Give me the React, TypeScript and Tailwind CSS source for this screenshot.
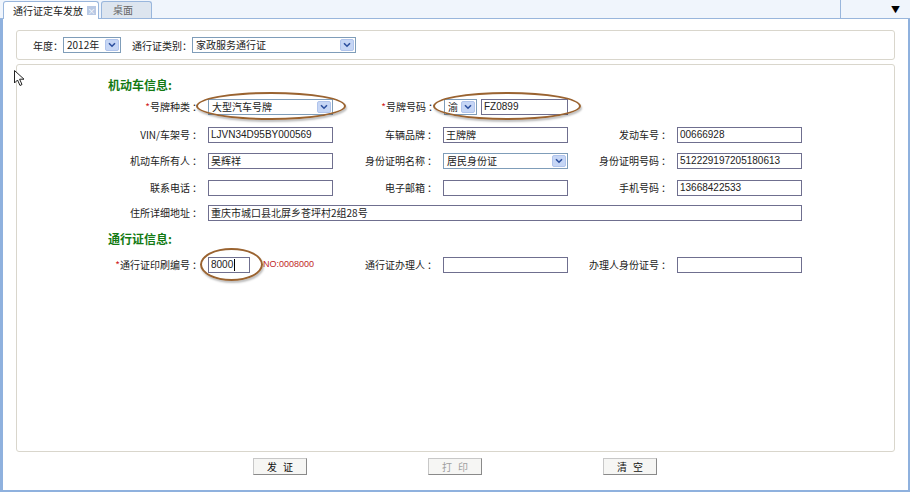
import { FC, ReactNode } from 'react';

const font = 'font-["Noto_Sans_CJK_SC","Liberation_Sans",sans-serif]';

const Chevron: FC = () => (
  <svg width="8" height="6" viewBox="0 0 8 6" className="block">
    <path d="M1 1.2 L4 4.2 L7 1.2" fill="none" stroke="#2c4f9e" strokeWidth="1.6" />
  </svg>
);

const Select: FC<{ value: string; className?: string }> = ({ value, className }) => (
  <div className={`flex h-[16px] items-center border border-[#7f9db9] bg-white ${className ?? ''}`}>
    <span className="flex-1 overflow-hidden whitespace-nowrap pl-[3px] text-[10px] leading-[14px] text-[#222]">
      {value}
    </span>
    <span className="mr-px flex h-[12px] w-[14px] items-center justify-center rounded-[2px] bg-[#c6d6f5] border border-[#b0c4ec]">
      <Chevron />
    </span>
  </div>
);

const Field: FC<{ value?: string; className?: string; mono?: boolean; children?: ReactNode }> = ({
  value,
  className,
  mono,
  children,
}) => (
  <div
    className={`flex h-[16px] items-center border border-[#6f6f8f] bg-white pl-[2px] text-[#222] whitespace-nowrap overflow-hidden ${
      mono ? 'font-["Liberation_Sans",sans-serif] text-[10px]' : 'text-[10px]'
    } leading-[14px] ${className ?? 'w-[125px]'}`}
  >
    {value}
    {children}
  </div>
);

const Label: FC<{ text: string; w: string; required?: boolean }> = ({ text, w, required }) => (
  <div className={`${w} shrink-0 pr-[6px] text-right text-[10px] leading-[14px] text-[#222]`}>
    {required && <span className="text-[#d02020]">*</span>}
    {text}
    <span className="ml-[2px]">：</span>
  </div>
);

const Ring: FC<{ className: string }> = ({ className }) => (
  <span
    className={`pointer-events-none absolute rounded-[50%] border-2 border-[#9a6330] shadow-[1px_2px_2px_rgba(0,0,0,0.25)] ${className}`}
  />
);

const Button: FC<{ text: string; disabled?: boolean }> = ({ text, disabled }) => (
  <button
    className={`h-[17px] w-[54px] border border-[#8a8a8a] border-t-[#c8c8c8] border-l-[#c8c8c8] bg-[#f6f6f4] text-[10px] leading-[15px] tracking-[6px] pl-[6px] ${
      disabled ? 'text-[#a0a0a0]' : 'text-[#111]'
    }`}
  >
    {text}
  </button>
);

export default function App() {
  return (
    <div className={`relative flex h-[492px] w-[910px] flex-col overflow-hidden bg-white ${font}`}>
      {/* tab strip */}
      <div className="flex h-[19px] shrink-0 items-end border-b border-[#99b6dc] bg-[#f0f5fc]">
        <div className="ml-[3px] flex h-[18px] w-[96px] items-center rounded-t-[3px] border border-b-0 border-[#99b6dc] bg-white pl-[9px] -mb-px">
          <span className="text-[10px] leading-[12px] text-[#222]">通行证定车发放</span>
          <span className="ml-[4px] flex h-[9px] w-[9px] items-center justify-center bg-[#b9c9e4] text-[8px] leading-none text-white">
            ×
          </span>
        </div>
        <div className="ml-[2px] flex h-[17px] w-[51px] items-center rounded-t-[3px] border border-b-0 border-[#99b6dc] bg-[#dde5ef] pl-[11px]">
          <span className="text-[10px] leading-[12px] text-[#666]">桌面</span>
        </div>
        <div className="flex-1" />
        <div className="flex h-[19px] w-[70px] items-center justify-end border-l border-[#99b6dc] pr-[10px] -mb-px">
          <span className="text-[9px] leading-none text-black">▼</span>
        </div>
      </div>

      {/* frame */}
      <div className="flex flex-1 flex-col border-b-2 border-l-[3px] border-r-2 border-[#8fb1de] px-[13px] pt-[11px]">
        {/* filter */}
        <div className="flex h-[30px] shrink-0 items-center rounded-[3px] border border-[#d9d6cc] pl-[16px]">
          <span className="text-[10px] text-[#222]">年度：</span>
          <Select value="2012年" className="w-[58px]" />
          <span className="ml-[11px] text-[10px] text-[#222]">通行证类别：</span>
          <Select value="家政服务通行证" className="w-[164px]" />
        </div>

        {/* main form */}
        <div className="relative mt-[4px] h-[388px] shrink-0 rounded-[3px] border border-[#d9d6cc] pt-[12px]">
          <div className="h-[16px] pl-[91px] text-[12px] font-bold leading-[16px] text-[#137a13]">机动车信息:</div>

          <div className="flex h-[28px] items-center">
            <Label text="号牌种类" w="w-[191px]" required />
            <div className="relative">
              <Select value="大型汽车号牌" className="w-[125px]" />
              <Ring className="-left-[12px] -right-[13px] -top-[7px] -bottom-[5px]" />
            </div>
            <Label text="号牌号码" w="w-[111px]" required />
            <div className="relative flex items-center">
              <Select value="渝" className="w-[33px]" />
              <Field value="FZ0899" mono className="ml-[4px] w-[87px]" />
              <Ring className="-left-[11px] -right-[13px] -top-[7px] -bottom-[5px]" />
            </div>
          </div>

          <div className="flex h-[27px] items-center">
            <Label text="VIN/车架号" w="w-[191px]" />
            <Field value="LJVN34D95BY000569" mono />
            <Label text="车辆品牌" w="w-[110px]" />
            <Field value="王牌牌" />
            <Label text="发动车号" w="w-[109px]" />
            <Field value="00666928" mono />
          </div>

          <div className="flex h-[26px] items-center">
            <Label text="机动车所有人" w="w-[191px]" />
            <Field value="吴辉祥" />
            <Label text="身份证明名称" w="w-[110px]" />
            <Select value="居民身份证" className="w-[125px]" />
            <Label text="身份证明号码" w="w-[109px]" />
            <Field value="512229197205180613" mono />
          </div>

          <div className="flex h-[27px] items-center">
            <Label text="联系电话" w="w-[191px]" />
            <Field />
            <Label text="电子邮箱" w="w-[110px]" />
            <Field />
            <Label text="手机号码" w="w-[109px]" />
            <Field value="13668422533" mono />
          </div>

          <div className="flex h-[24px] items-center">
            <Label text="住所详细地址" w="w-[191px]" />
            <Field value="重庆市城口县北屏乡苍坪村2组28号" className="w-[594px]" />
          </div>

          <div className="flex h-[28px] items-center pl-[91px] text-[12px] font-bold leading-[16px] text-[#137a13]">
            通行证信息:
          </div>

          <div className="flex h-[24px] items-center">
            <Label text="通行证印刷编号" w="w-[191px]" required />
            <div className="flex w-[125px] items-center">
              <div className="relative">
                <Field value="8000" mono className="w-[42px]">
                  <span className="ml-px h-[12px] w-px bg-black" />
                </Field>
                <Ring className="-left-[8px] -right-[13px] -top-[9px] -bottom-[8px]" />
              </div>
              <span className="ml-[13px] font-['Liberation_Sans',sans-serif] text-[9px] text-[#c02828]">NO:0008000</span>
            </div>
            <Label text="通行证办理人" w="w-[110px]" />
            <Field />
            <Label text="办理人身份证号" w="w-[109px]" />
            <Field />
          </div>

          {/* mouse pointer */}
          <svg width="11" height="17" viewBox="0 0 11 17" className="absolute -left-[3px] top-[5px]">
            <path d="M0.5 0.5 L0.5 13 L3.5 10 L6 15.5 L8 14.5 L5.6 9.2 L10 9.2 Z" fill="white" stroke="#222" strokeWidth="1" />
          </svg>
        </div>

        {/* actions */}
        <div className="flex gap-[121px] pl-[237px] pt-[6px]">
          <Button text="发证" />
          <Button text="打印" disabled />
          <Button text="清空" />
        </div>
      </div>
    </div>
  );
}
